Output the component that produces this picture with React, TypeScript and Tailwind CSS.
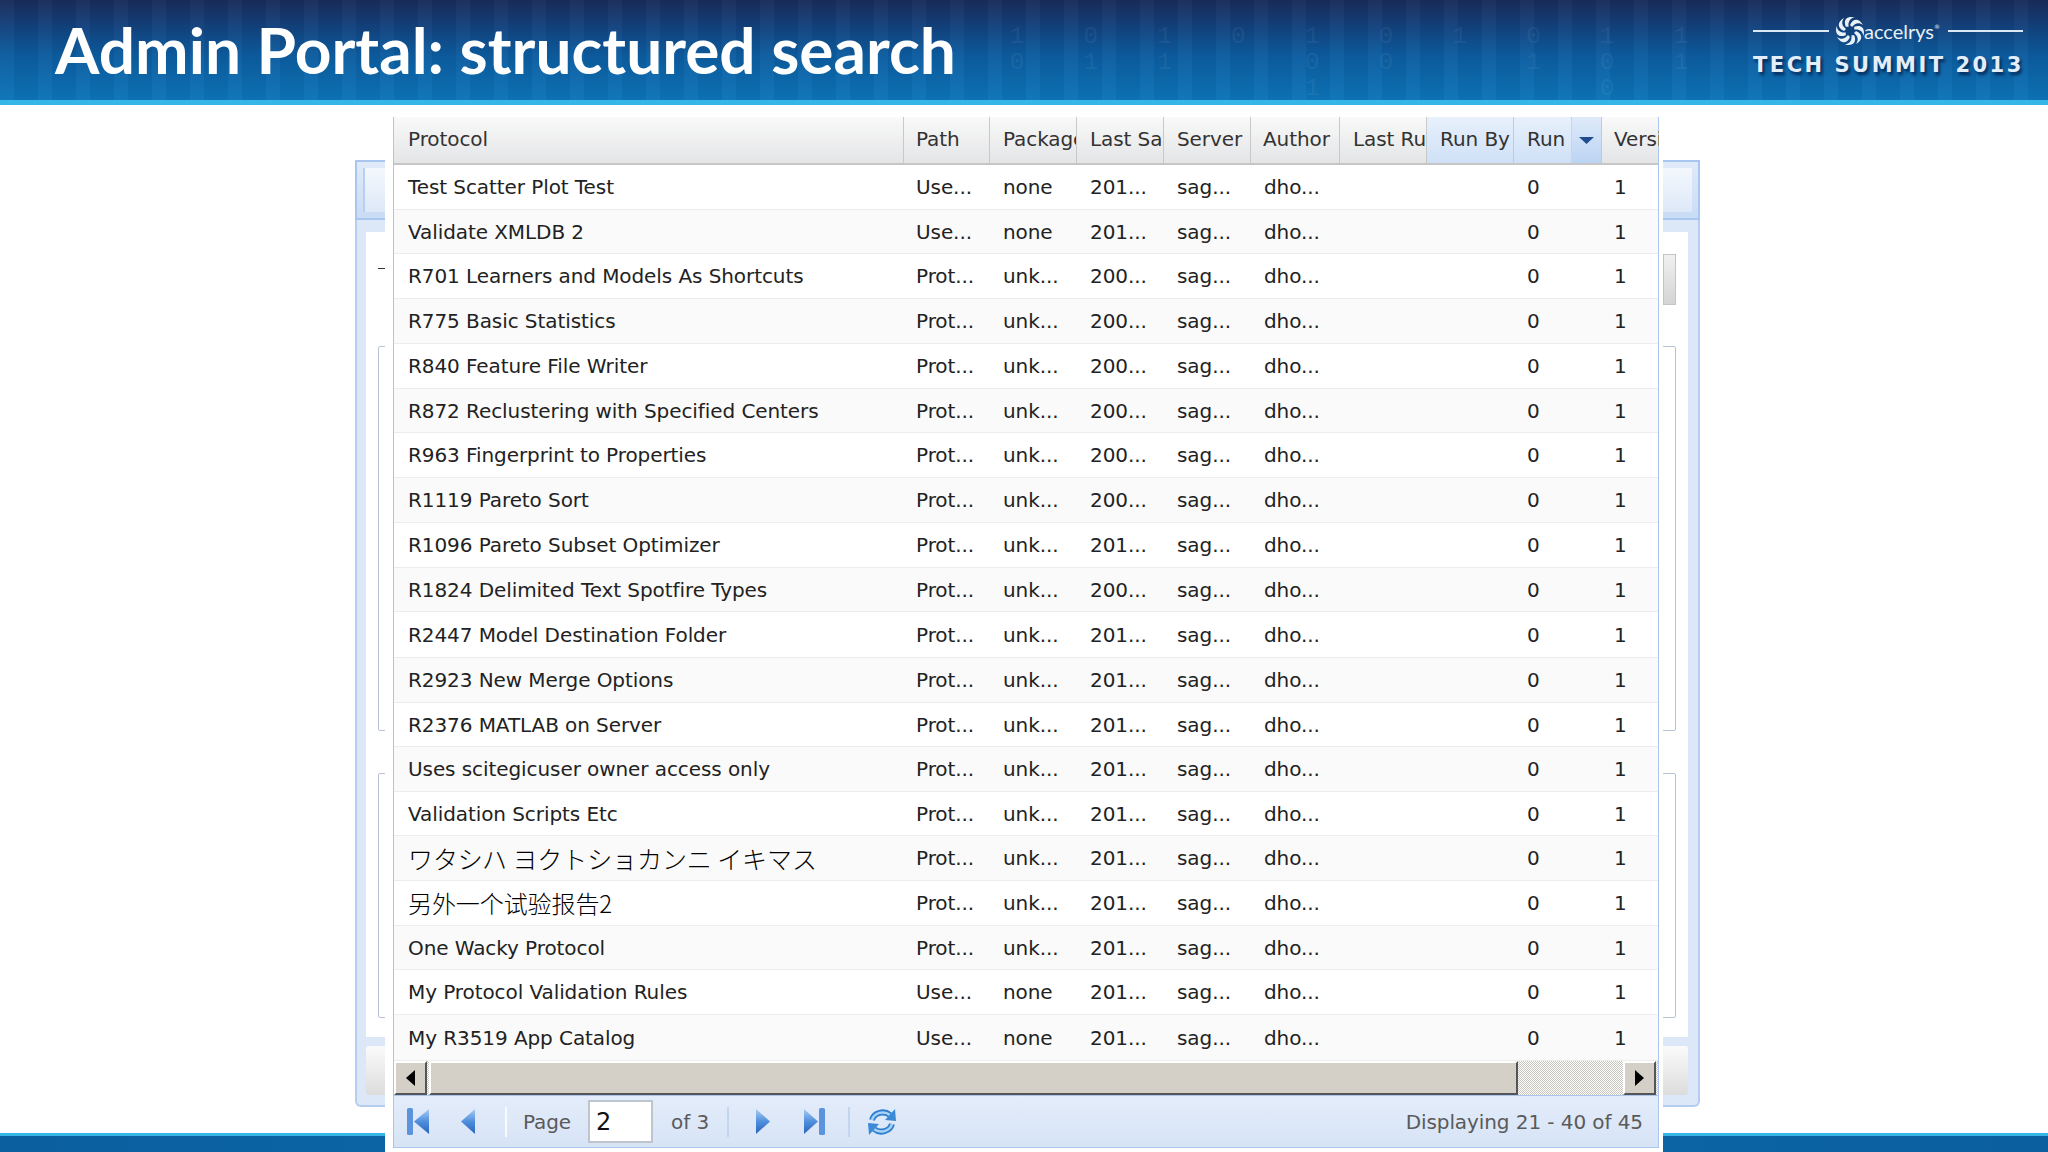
// Admin portal slide: protocol search results grid over the portal panel

const rows = [
  { name: 'Test Scatter Plot Test', path: 'Use...', pkg: 'none', saved: '201...', h: 'h-[45px]' },
  { name: 'Validate XMLDB 2', path: 'Use...', pkg: 'none', saved: '201...', h: 'h-[44px]' },
  { name: 'R701 Learners and Models As Shortcuts', path: 'Prot...', pkg: 'unk...', saved: '200...', h: 'h-[45px]' },
  { name: 'R775 Basic Statistics', path: 'Prot...', pkg: 'unk...', saved: '200...', h: 'h-[45px]' },
  { name: 'R840 Feature File Writer', path: 'Prot...', pkg: 'unk...', saved: '200...', h: 'h-[45px]' },
  { name: 'R872 Reclustering with Specified Centers', path: 'Prot...', pkg: 'unk...', saved: '200...', h: 'h-[44px]' },
  { name: 'R963 Fingerprint to Properties', path: 'Prot...', pkg: 'unk...', saved: '200...', h: 'h-[45px]' },
  { name: 'R1119 Pareto Sort', path: 'Prot...', pkg: 'unk...', saved: '200...', h: 'h-[45px]' },
  { name: 'R1096 Pareto Subset Optimizer', path: 'Prot...', pkg: 'unk...', saved: '201...', h: 'h-[45px]' },
  { name: 'R1824 Delimited Text Spotfire Types', path: 'Prot...', pkg: 'unk...', saved: '200...', h: 'h-[44px]' },
  { name: 'R2447 Model Destination Folder', path: 'Prot...', pkg: 'unk...', saved: '201...', h: 'h-[46px]' },
  { name: 'R2923 New Merge Options', path: 'Prot...', pkg: 'unk...', saved: '201...', h: 'h-[45px]' },
  { name: 'R2376 MATLAB on Server', path: 'Prot...', pkg: 'unk...', saved: '201...', h: 'h-[44px]' },
  { name: 'Uses scitegicuser owner access only', path: 'Prot...', pkg: 'unk...', saved: '201...', h: 'h-[45px]' },
  { name: 'Validation Scripts Etc', path: 'Prot...', pkg: 'unk...', saved: '201...', h: 'h-[44px]' },
  { name: 'ワタシハ ヨクトショカンニ イキマス', path: 'Prot...', pkg: 'unk...', saved: '201...', h: 'h-[45px]', cjk: 'jp' },
  { name: '另外一个试验报告2', path: 'Prot...', pkg: 'unk...', saved: '201...', h: 'h-[45px]', cjk: 'sc' },
  { name: 'One Wacky Protocol', path: 'Prot...', pkg: 'unk...', saved: '201...', h: 'h-[44px]' },
  { name: 'My Protocol Validation Rules', path: 'Use...', pkg: 'none', saved: '201...', h: 'h-[45px]' },
  { name: 'My R3519 App Catalog', path: 'Use...', pkg: 'none', saved: '201...', h: 'h-[46px]' },
];

const gridCols = 'grid grid-cols-[510px_86px_87px_87px_87px_89px_87px_87px_88px_57px]';

const digitColumns = ['1 0', '0 1', '1 1', '0', '1 0 1', '0 0', '1', '0 1', '1 0 0', '1 1'];

function HeaderCell({ label, active, pad = 'pl-[13px]' }: { label: string; active?: boolean; pad?: string }) {
  return (
    <div
      className={`flex items-center overflow-hidden whitespace-nowrap border-r border-[#c9c9c9] pb-[2px] ${pad} ${
        active ? 'bg-gradient-to-b from-[#e8f1fc] to-[#cfe0f6]' : ''
      }`}
    >
      {label}
    </div>
  );
}

function RefreshIcon() {
  return (
    <svg width="30" height="30" viewBox="0 0 30 30">
      <g fill="none" strokeWidth="6">
        <path d="M5 13 A11 10 0 0 1 23 8" stroke="#2f7fd0" />
        <path d="M25 17 A11 10 0 0 1 7 22" stroke="#2f7fd0" />
      </g>
      <g fill="none" strokeWidth="2.5">
        <path d="M5 13 A11 10 0 0 1 23 8" stroke="#a6d3f5" />
        <path d="M25 17 A11 10 0 0 1 7 22" stroke="#a6d3f5" />
      </g>
      <path d="M18 13 L29 14 L28 2 Z" fill="#3b8ad8" />
      <path d="M12 17 L1 16 L2 28 Z" fill="#3b8ad8" />
    </svg>
  );
}

function PagerIcon({ dir, bar }: { dir: 'left' | 'right'; bar?: boolean }) {
  const width = bar ? 23 : 16;
  const points =
    dir === 'left'
      ? bar
        ? '22,1 22,26 7,13.5'
        : '15,1 15,26 1,13.5'
      : '1,1 1,26 15,13.5';
  return (
    <svg width={width} height="27" viewBox={`0 0 ${width} 27`}>
      <defs>
        <linearGradient id={`pg-${dir}-${bar ? 'b' : 'n'}`} x1="0" y1="0" x2="0" y2="1">
          <stop offset="0" stopColor="#a9ccf3" />
          <stop offset="0.5" stopColor="#4f8fdd" />
          <stop offset="1" stopColor="#2a63bd" />
        </linearGradient>
      </defs>
      <polygon points={points} fill={`url(#pg-${dir}-${bar ? 'b' : 'n'})`} />
      {bar && <rect x={dir === 'left' ? 0 : 16} y="0" width="6" height="27" rx="1.5" fill="#5b93dc" />}
    </svg>
  );
}

function Swirl() {
  const blades = [0, 45, 90, 135, 180, 225, 270, 315];
  return (
    <svg width="28" height="28" viewBox="0 0 28 28">
      {blades.map((deg) => (
        <path
          key={deg}
          d="M14 8 C17 1 23 1 27 8 C23 5 19 6 16 10 Z"
          fill="#e8f1f8"
          transform={`rotate(${deg} 14 14)`}
        />
      ))}
    </svg>
  );
}

function ScrollArrow({ dir }: { dir: 'left' | 'right' }) {
  return (
    <div className="flex h-full w-[33px] shrink-0 items-center justify-center border-t-2 border-l-2 border-t-white border-l-white border-r-2 border-b-2 border-r-[#555] border-b-[#555] bg-[#d4d0c8]">
      <svg width="9" height="16" viewBox="0 0 9 16">
        <polygon points={dir === 'left' ? '9,0 9,16 0,8' : '0,0 0,16 9,8'} fill="#000" />
      </svg>
    </div>
  );
}

export default function App() {
  return (
    <div className="relative flex h-[1152px] w-[2048px] flex-col overflow-hidden bg-white font-['DejaVu_Sans',sans-serif]">
      {/* Slide banner */}
      <header className="relative flex h-[105px] shrink-0 items-start justify-between overflow-hidden border-b-[5px] border-[#35b6e6] bg-[linear-gradient(180deg,#1a2b5a_0%,#12437f_28%,#0c5c9f_55%,#0c74b8_100%)] pl-[55px] pr-[25px]">
        <div className="absolute inset-0 bg-[repeating-linear-gradient(90deg,rgba(255,255,255,0.025)_0_14px,rgba(0,0,0,0.03)_14px_38px)]" />
        <div className="absolute left-[980px] right-[330px] top-[24px] flex justify-around font-['Liberation_Mono',monospace] text-[24px] leading-[26px] text-white opacity-[0.05]">
          {digitColumns.map((col, i) => (
            <div key={i} className="flex flex-col">
              {col.split(' ').map((d, j) => (
                <span key={j}>{d}</span>
              ))}
            </div>
          ))}
        </div>
        <h1 className="relative mt-[14px] font-['Lato',sans-serif] text-[64px] font-bold leading-[72px] text-white">
          Admin Portal: structured search
        </h1>
        <div className="relative mt-[17px] flex w-[270px] flex-col">
          <div className="flex items-center">
            <div className="h-[2px] w-[76px] bg-[#dbe9f5]" />
            <div className="ml-[7px]">
              <Swirl />
            </div>
            <span className="font-['Lato',sans-serif] text-[20px] leading-[26px] text-[#e6eff6]">accelrys</span>
            <span className="mb-[10px] text-[6px] text-[#e6eff6]">®</span>
            <div className="ml-[8px] h-[2px] flex-1 bg-[#dbe9f5]" />
          </div>
          <div className="mt-[8px] whitespace-nowrap text-[21px] font-bold leading-[24px] tracking-[2.5px] text-[#e3eef8] [text-shadow:2px_3px_3px_rgba(0,20,60,0.7)]">
            TECH SUMMIT 2013
          </div>
        </div>
      </header>

      <main className="relative flex-1">
        <div className="absolute inset-x-0 bottom-0 h-[19px] border-t-[3px] border-[#35b6e6] bg-gradient-to-r from-[#0b5f9f] via-[#0c6cae] to-[#0b5f9f]" />

        {/* Portal panel behind the grid */}
        <div className="absolute left-[355px] top-[55px] flex h-[947px] w-[1345px] flex-col">
          <div className="h-[60px] shrink-0 border-2 border-[#a9c6ee] bg-gradient-to-b from-[#e0eafa] to-[#c9dcf5] p-[6px]">
            <div className="h-[44px] border-l-2 border-[#b9cfee] bg-gradient-to-b from-[#f4f8fd] to-[#dde8f8]" />
          </div>
          <div className="flex flex-1 flex-col rounded-b-[6px] border-x-2 border-b-2 border-[#b4cdf0] bg-[#dce8f8] pl-[9px] pr-[10px] pt-[12px]">
            <div className="relative flex h-[805px] flex-col bg-white px-[12px] pt-[114px]">
              <div className="absolute left-[12px] top-[36px] h-[1px] w-[7px] bg-[#333]" />
              <div className="absolute right-[12px] top-[22px] h-[51px] w-[13px] border border-[#c4c4c4] bg-gradient-to-b from-[#f0f0f0] to-[#d4d4d4]" />
              <div className="h-[385px] rounded-[2px] border border-[#b9c3d6]" />
              <div className="mt-[42px] h-[245px] rounded-[2px] border border-[#b9c3d6]" />
            </div>
            <div className="mt-[9px] h-[49px] rounded-[3px] bg-gradient-to-b from-[#fbfbfb] to-[#dcdcdc]" />
          </div>
        </div>

        {/* Search results grid */}
        <div className="relative z-10 mx-auto flex h-full w-[1278px] flex-col bg-white pb-[4px] pl-[8px] pr-[4px] pt-[12px]">
          <div className="flex flex-1 flex-col border-x border-[#aac6ee] text-[20px] leading-none tracking-[-0.08px] text-[#222]">
            <div
              className={`${gridCols} h-[48px] shrink-0 border-b-2 border-[#c6c6c6] bg-gradient-to-b from-[#f9f9f9] to-[#e4e5e7] text-[#333]`}
            >
              <HeaderCell label="Protocol" pad="pl-[14px]" />
              <HeaderCell label="Path" pad="pl-[12px]" />
              <HeaderCell label="Package" />
              <HeaderCell label="Last Saved" />
              <HeaderCell label="Server" />
              <HeaderCell label="Author" pad="pl-[12px]" />
              <HeaderCell label="Last Run" />
              <HeaderCell label="Run By" active />
              <div className="flex border-r border-[#c9c9c9] bg-gradient-to-b from-[#e8f1fc] to-[#cfe0f6]">
                <div className="flex flex-1 items-center pb-[2px] pl-[13px]">Run</div>
                <div className="flex w-[30px] items-center justify-center border-l border-[#c3d6f0] bg-gradient-to-b from-[#dfeafa] to-[#bcd4f3]">
                  <svg width="15" height="7" viewBox="0 0 15 7">
                    <polygon points="0,0 15,0 7.5,7" fill="#1f4b8f" />
                  </svg>
                </div>
              </div>
              <div className="flex items-center overflow-hidden whitespace-nowrap pb-[2px] pl-[12px]">Version</div>
            </div>

            {rows.map((row, i) => (
              <div
                key={row.name}
                className={`${gridCols} ${row.h} shrink-0 items-center border-b border-[#ededed] ${i % 2 === 1 ? 'bg-[#fafafa]' : 'bg-white'}`}
              >
                <div
                  className={`whitespace-nowrap pl-[14px] ${
                    row.cjk === 'jp'
                      ? "font-['Noto_Sans_CJK_JP',sans-serif] text-[25px] font-light text-black"
                      : row.cjk === 'sc'
                        ? "font-['Noto_Sans_CJK_SC',sans-serif] text-[24px] font-light text-black"
                        : ''
                  }`}
                >
                  {row.name}
                </div>
                <div className="pl-[12px]">{row.path}</div>
                <div className="pl-[13px]">{row.pkg}</div>
                <div className="pl-[13px]">{row.saved}</div>
                <div className="pl-[13px]">{'sag...'}</div>
                <div className="pl-[13px]">{'dho...'}</div>
                <div />
                <div />
                <div className="pl-[13px]">0</div>
                <div className="pl-[12px]">1</div>
              </div>
            ))}

            {/* Horizontal scrollbar */}
            <div className="flex h-[34px] shrink-0 bg-[repeating-conic-gradient(#c8c5be_0_25%,#ffffff_0_50%)] bg-[length:2px_2px] pr-[2px]">
              <ScrollArrow dir="left" />
              <div className="ml-[2px] h-full w-[1089px] border-l-2 border-t-2 border-b-2 border-r-2 border-l-white border-t-white border-b-[#555] border-r-[#555] bg-[#d4d0c8]" />
              <div className="flex-1" />
              <ScrollArrow dir="right" />
            </div>

            {/* Paging toolbar */}
            <div className="flex flex-1 items-center border-y border-[#a9c6ee] bg-gradient-to-b from-[#e3ecfa] to-[#d7e4f6] pl-[13px] pr-[15px] text-[#5a5a5a]">
              <PagerIcon dir="left" bar />
              <div className="ml-[30px]">
                <PagerIcon dir="left" />
              </div>
              <div className="ml-[29px] h-[30px] w-[2px] bg-[#f7fafe]" />
              <span className="ml-[16px] w-[49px]">Page</span>
              <div className="ml-[16px] flex h-[43px] w-[65px] items-center border-2 border-[#bfc5cd] bg-white pl-[6px] text-[24px] text-[#111]">
                2
              </div>
              <span className="ml-[18px] w-[38px] whitespace-nowrap">of 3</span>
              <div className="ml-[18px] h-[30px] w-[2px] bg-[#c4d6ee]" />
              <div className="ml-[26px]">
                <PagerIcon dir="right" />
              </div>
              <div className="ml-[32px]">
                <PagerIcon dir="right" bar />
              </div>
              <div className="ml-[22px] h-[30px] w-[2px] bg-[#c4d6ee]" />
              <div className="ml-[17px]">
                <RefreshIcon />
              </div>
              <span className="ml-auto">Displaying 21 - 40 of 45</span>
            </div>
          </div>
        </div>
      </main>
    </div>
  );
}
